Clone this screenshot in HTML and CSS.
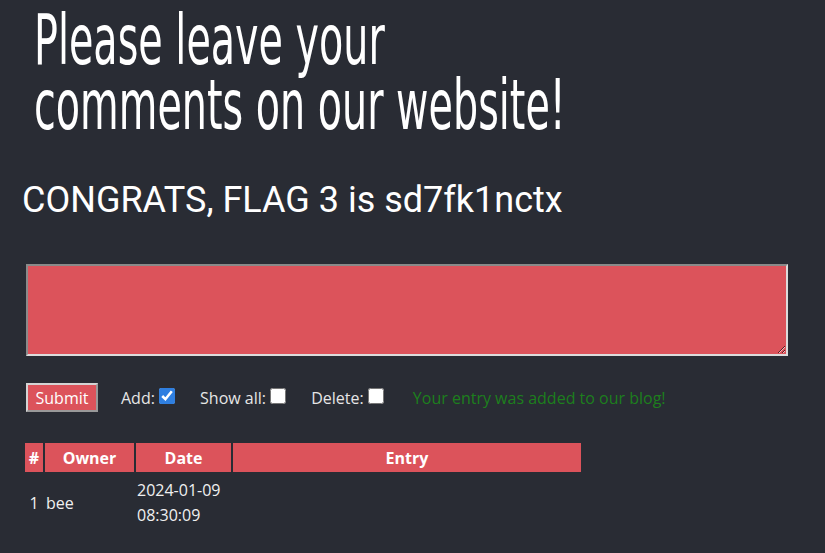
FILE: index.html
```html
<!DOCTYPE html>
<html>
<head>
<meta charset="utf-8">
<link rel="stylesheet" href="styles.css">
</head>
<body>
<div class="page">
  <h1 class="title">Please leave your<br>comments on our website!</h1>
  <h2 class="flag">CONGRATS, FLAG 3 is sd7fk1nctx</h2>
  <form class="form">
    <textarea class="entry-box"></textarea>
    <div class="controls">
      <button type="button" class="submit">Submit</button>
      <label class="opt opt-add">Add: <input type="checkbox" class="chk" checked></label>
      <label class="opt">Show all: <input type="checkbox" class="chk"></label>
      <label class="opt">Delete: <input type="checkbox" class="chk"></label>
      <span class="msg">Your entry was added to our blog!</span>
    </div>
  </form>
  <table class="blog">
    <thead>
      <tr><th class="c-num">#</th><th class="c-owner">Owner</th><th class="c-date">Date</th><th class="c-entry">Entry</th></tr>
    </thead>
    <tbody>
      <tr><td class="num">1</td><td>bee</td><td>2024-01-09 08:30:09</td><td></td></tr>
    </tbody>
  </table>
</div>
</body>
</html>
```
FILE: styles.css
```css
html, body {
  margin: 0;
  padding: 0;
  background: #292c34;
  color: #ffffff;
  font-family: "Open Sans", "DejaVu Sans", sans-serif;
}
.page {
  padding: 8px 0 0 22px;
}
.title {
  margin: 0 0 0 12px;
  font-family: "DejaVu Sans Condensed", "DejaVu Sans", sans-serif;
  font-stretch: condensed;
  font-weight: normal;
  font-size: 70px;
  line-height: 65px;
  color: #ffffff;
  transform: scaleX(0.63);
  transform-origin: left top;
  white-space: nowrap;
}
.flag {
  margin: 42px 0 0 0;
  font-family: Roboto, "Liberation Sans", sans-serif;
  font-weight: normal;
  font-size: 36px;
  line-height: 41px;
  color: #ffffff;
}
.form {
  margin: 43px 0 0 4px;
}
.entry-box {
  display: block;
  box-sizing: border-box;
  width: 762px;
  height: 92px;
  margin: 0;
  background: #dc535b;
  border: 2px solid;
  border-color: #8a8a8a #dcdcdc #dcdcdc #8a8a8a;
  color: #fff;
}
.controls {
  display: flex;
  align-items: center;
  height: 29px;
  margin-top: 27px;
  font-size: 16px;
  color: #e6e6e6;
}
.submit {
  box-sizing: border-box;
  height: 29px;
  width: 72px;
  padding: 0;
  background: #dc535b;
  color: #ffffff;
  font-family: "Open Sans", sans-serif;
  font-size: 16px;
  border: 2px solid;
  border-color: #d4d4d4 #999999 #999999 #d4d4d4;
}
.opt {
  display: flex;
  align-items: center;
  margin-left: 25px;
  white-space: pre;
}
.opt-add {
  margin-left: 23px;
}
.chk {
  width: 16px;
  height: 16px;
  margin: 0 0 4px 0;
  accent-color: #2f7fe0;
}
.msg {
  margin-left: 29px;
  color: #1d7f1d;
}
.blog {
  margin: 29px 0 0 1px;
  border-spacing: 2px;
  font-size: 16px;
  table-layout: fixed;
  width: 560px;
}
.blog th {
  background: #dc535b;
  color: #ffffff;
  font-weight: bold;
  height: 29px;
  padding: 0;
  text-align: center;
}
.c-num { width: 18px; }
.c-owner { width: 89px; }
.c-date { width: 95px; }
.blog td {
  color: #f0f0f0;
  padding: 4px 0 4px 1px;
  line-height: 25px;
  vertical-align: middle;
}
.blog td.num {
  text-align: center;
  padding-left: 0;
}
```
